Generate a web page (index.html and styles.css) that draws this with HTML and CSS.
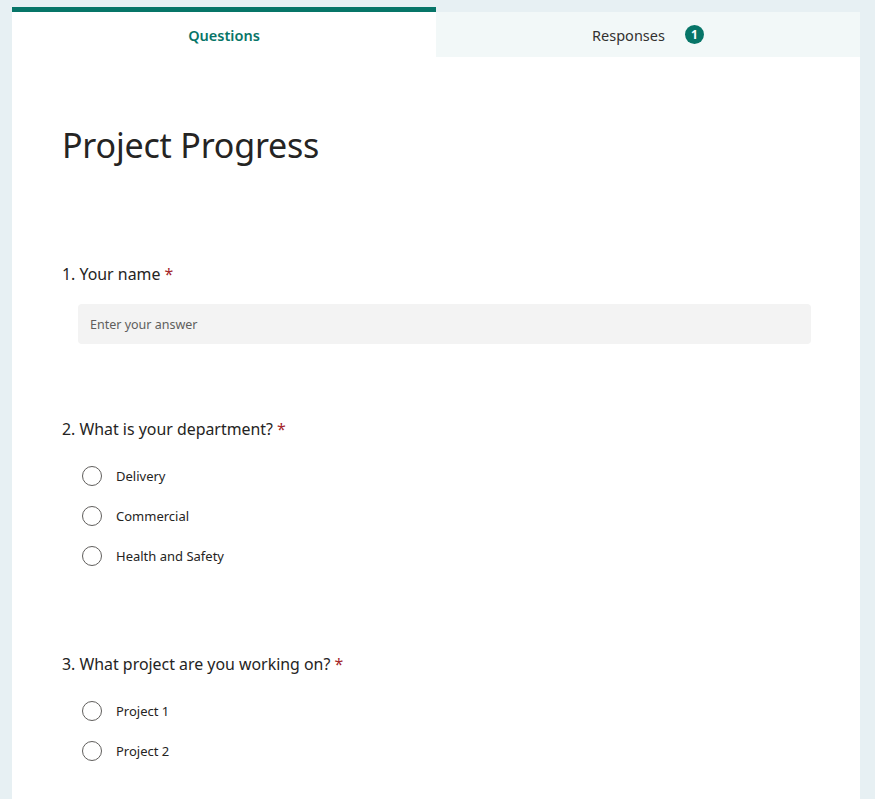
FILE: index.html
```html
<!DOCTYPE html>
<html lang="en">
<head>
<meta charset="utf-8">
<title>Project Progress</title>
<link rel="stylesheet" href="styles.css">
</head>
<body>
<div class="card">
  <div class="tabs">
    <div class="tab tab-active">Questions</div>
    <div class="tab tab-inactive"><span>Responses</span><span class="badge">1</span></div>
  </div>
  <div class="content">
    <h1 class="title">Project Progress</h1>

    <div class="question q1">
      <div class="label">1. Your name <span class="req">*</span></div>
      <div class="input">Enter your answer</div>
    </div>

    <div class="question q2">
      <div class="label">2. What is your department? <span class="req">*</span></div>
      <div class="options">
        <div class="option"><span class="radio"></span><span>Delivery</span></div>
        <div class="option"><span class="radio"></span><span>Commercial</span></div>
        <div class="option"><span class="radio"></span><span>Health and Safety</span></div>
      </div>
    </div>

    <div class="question q3">
      <div class="label">3. What project are you working on? <span class="req">*</span></div>
      <div class="options">
        <div class="option"><span class="radio"></span><span>Project 1</span></div>
        <div class="option"><span class="radio"></span><span>Project 2</span></div>
      </div>
    </div>
  </div>
</div>
</body>
</html>
```

FILE: styles.css
```css
html, body {
  margin: 0;
  padding: 0;
}
body {
  background: #e7f0f3;
  font-family: "Noto Sans", "Open Sans", sans-serif;
  color: #323130;
  height: 799px;
  overflow: hidden;
}
.card {
  margin: 7px 0 0 12px;
  width: 848px;
  height: 792px;
  display: flex;
  flex-direction: column;
}
.tabs {
  display: flex;
  height: 50px;
  flex: none;
}
.tab {
  flex: 1;
  display: flex;
  align-items: center;
  justify-content: center;
  font-size: 14.5px;
}
.tab-active {
  border-top: 5px solid #077568;
  color: #077568;
  font-weight: 600;
  background: #ffffff;
}
.tab-inactive {
  margin-top: 5px;
  background: #f2f8f8;
  color: #323130;
  gap: 20px;
}
.badge {
  width: 19px;
  height: 19px;
  border-radius: 50%;
  background: #077568;
  color: #ffffff;
  font-size: 12px;
  font-weight: 700;
  display: flex;
  align-items: center;
  justify-content: center;
  line-height: 1;
}
.content {
  flex: 1;
  background: #ffffff;
  padding-left: 50px;
}
.title {
  margin: 64px 0 0 0;
  font-size: 34px;
  font-weight: 400;
  line-height: 48px;
  color: #252423;
  letter-spacing: -0.2px;
}
.question .label {
  font-size: 15.9px;
  line-height: 22px;
  color: #252423;
}
.req {
  color: #a4262c;
}
.q1 { margin-top: 94px; }
.q2 { margin-top: 74px; }
.q3 { margin-top: 77px; }
.input {
  margin: 19px 0 0 16px;
  width: 733px;
  height: 40px;
  box-sizing: border-box;
  background: #f3f3f3;
  border-radius: 4px;
  padding-left: 12px;
  display: flex;
  align-items: center;
  font-size: 12.5px;
  color: #605e5c;
}
.options {
  margin-top: 16px;
}
.option {
  height: 40px;
  display: flex;
  align-items: center;
  padding-left: 20px;
  font-size: 13px;
  color: #252423;
}
.radio {
  width: 20px;
  height: 20px;
  box-sizing: border-box;
  border: 1px solid #605e5c;
  border-radius: 50%;
  margin-right: 14px;
  flex: none;
}
```
